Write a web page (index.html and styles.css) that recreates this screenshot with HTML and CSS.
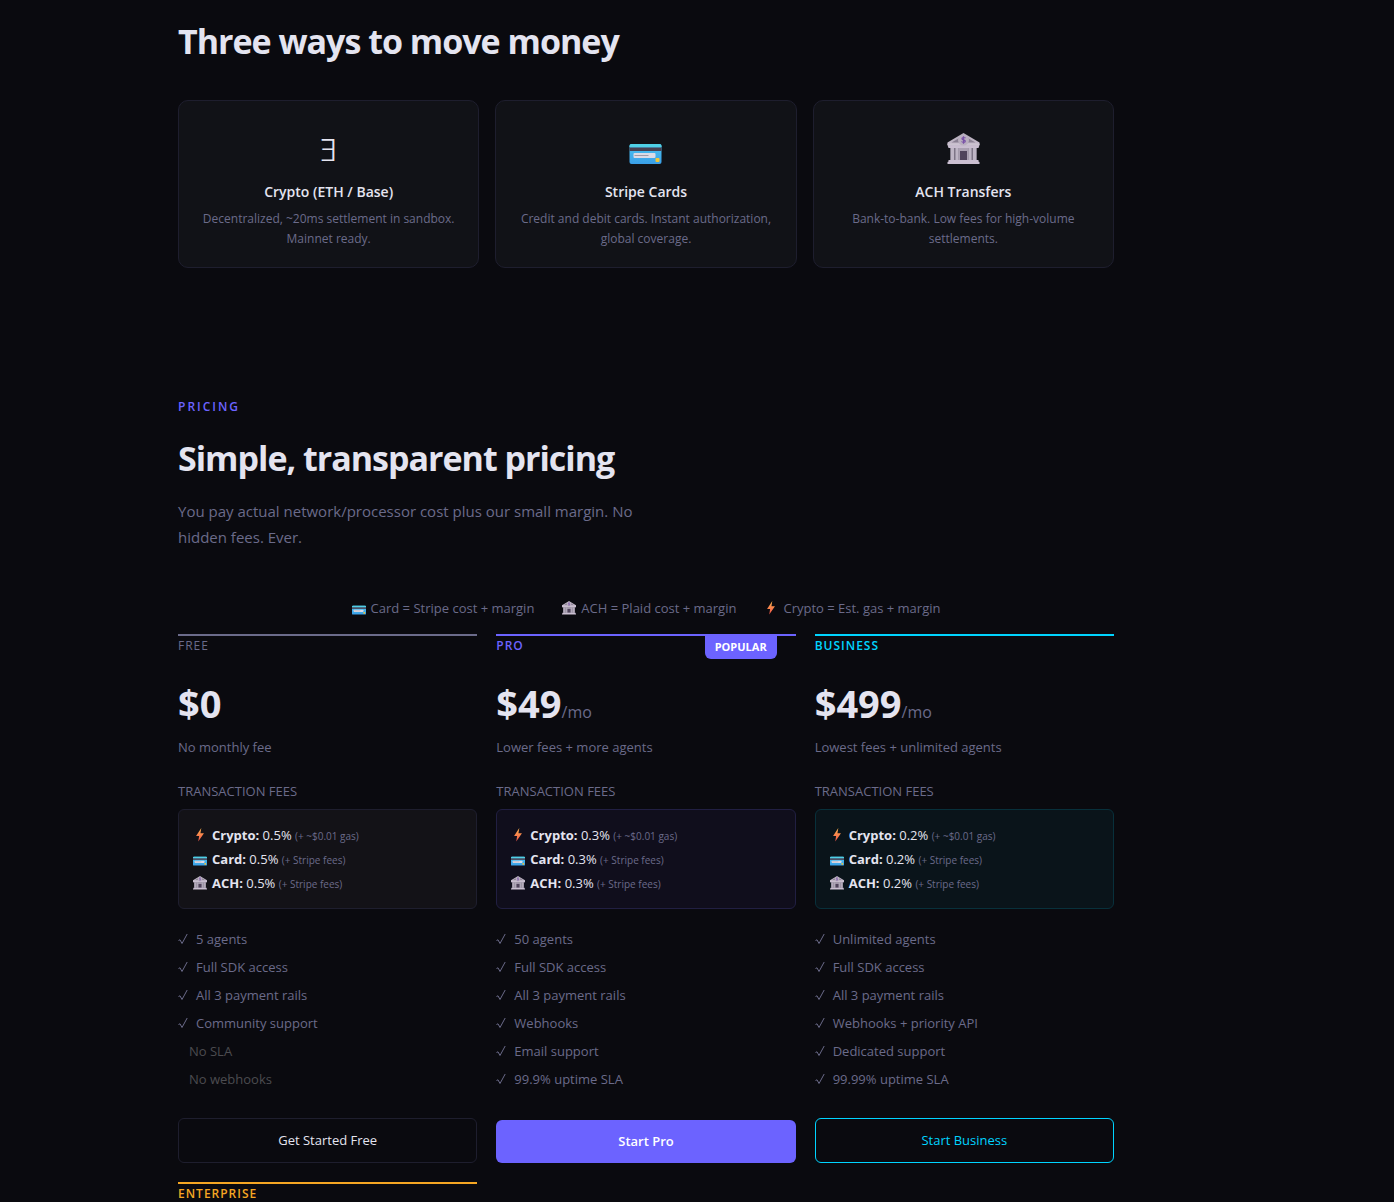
FILE: index.html
```html
<!DOCTYPE html>
<html lang="en">
<head>
<meta charset="utf-8">
<meta name="viewport" content="width=device-width, initial-scale=1">
<title>Pricing</title>
<link rel="stylesheet" href="styles.css">
</head>
<body>
<svg class="sprite" aria-hidden="true">
  <defs>
    <linearGradient id="card-face" x1="0" y1="0" x2="0" y2="1"><stop offset="0" stop-color="#4cc4f0"/><stop offset="1" stop-color="#3a9fe8"/></linearGradient>
    <linearGradient id="bolt-fill" x1="0" y1="0" x2="0" y2="1"><stop offset="0" stop-color="#ffb84d"/><stop offset="1" stop-color="#f2504b"/></linearGradient>
    <linearGradient id="stone" x1="0" y1="0" x2="0" y2="1"><stop offset="0" stop-color="#b3abb8"/><stop offset="1" stop-color="#cbbfd2"/></linearGradient>
    <symbol id="icon-card" viewBox="0 0 32 32">
      <rect y="11" width="32" height="20" rx="2" fill="url(#card-face)"/>
      <path d="M0 14v-1a2 2 0 0 1 2-2h28a2 2 0 0 1 2 2v1z" fill="#4fd0e6"/>
      <path d="M0 14.500h32V18H0z" fill="#484050"/>
      <rect x="4" y="20" width="22" height="5" rx="1" fill="#dcdbe6"/>
      <path d="M5 22.500h14" stroke="#a09ba8"/>
      <rect x="26" y="25" width="4" height="4" rx="1" fill="#f0c53a"/>
    </symbol>
    <symbol id="icon-bank" viewBox="0 0 32 32">
      <path d="M3 14h26v15H3z" fill="#7d7486"/>
      <path d="M0 9.500 16 0l16 9.500V12l-1 3H1l-1-3z" fill="url(#stone)"/>
      <path d="M4 9.500 16 2.500l12 7z" fill="#8b8194"/>
      <path d="M0 10.500h32V12H0z" fill="#cbc3d0"/>
      <path d="M3 15h3.500v12H3zM8 15h3v12H8zM21 15h3v12h-3zM25.500 15H29v12h-3.500z" fill="#beb5c5"/>
      <path d="M11 15h10v12H11z" fill="#aaa0b2"/>
      <path d="M12.500 18h7v9h-7z" fill="#50445c"/>
      <path d="M1 27h30v1.500l1 .5v2H0v-2l1-.5z" fill="#cbbfd2"/>
      <circle cx="16" cy="7" r="5.500" fill="#b9afbf"/>
      <path d="M18 5.200c-1-1.200-3.800-.8-3.500.6.300 1.400 3.300.9 3.300 2.500 0 1.400-2.800 1.500-3.800.2M16 3.200v7.600" fill="none" stroke="#7950a8" stroke-width="1.200"/>
    </symbol>
    <symbol id="icon-bolt" viewBox="0 0 32 32">
      <path d="M19 0 7 18h7l-2 13 13-19h-8z" fill="url(#bolt-fill)"/>
    </symbol>
    <symbol id="icon-check" viewBox="0 0 10 12">
      <path d="M.5 7.500 2 6.800 4 10.500 9.200 1" fill="none" stroke="currentColor"/>
    </symbol>
  </defs>
</svg>

<main class="page">
  <section class="rails">
    <h2 class="heading">Three ways to move money</h2>
    <div class="rail-grid">
      <article class="rail">
        <div class="rail-icon">Ǝ</div>
        <h3 class="rail-title">Crypto (ETH / Base)</h3>
        <p class="rail-text">Decentralized, ~20ms settlement in sandbox. Mainnet ready.</p>
      </article>
      <article class="rail">
        <div class="rail-icon"><svg class="rail-art"><use href="#icon-card"/></svg></div>
        <h3 class="rail-title">Stripe Cards</h3>
        <p class="rail-text">Credit and debit cards. Instant authorization, global coverage.</p>
      </article>
      <article class="rail">
        <div class="rail-icon"><svg class="rail-art"><use href="#icon-bank"/></svg></div>
        <h3 class="rail-title">ACH Transfers</h3>
        <p class="rail-text">Bank-to-bank. Low fees for high-volume settlements.</p>
      </article>
    </div>
  </section>

  <section class="pricing">
    <p class="eyebrow">PRICING</p>
    <h2 class="heading">Simple, transparent pricing</h2>
    <p class="lead">You pay actual network/processor cost plus our small margin. No hidden fees. Ever.</p>

    <ul class="legend">
      <li><svg class="glyph"><use href="#icon-card"/></svg>Card = Stripe cost + margin</li>
      <li><svg class="glyph"><use href="#icon-bank"/></svg>ACH = Plaid cost + margin</li>
      <li><svg class="glyph"><use href="#icon-bolt"/></svg>Crypto = Est. gas + margin</li>
    </ul>

    <div class="plans">
      <article class="plan plan-free">
        <h3 class="plan-name">FREE</h3>
        <p class="price">$0</p>
        <p class="plan-note">No monthly fee</p>
        <h4 class="fees-title">TRANSACTION FEES</h4>
        <ul class="fees">
          <li><svg class="glyph"><use href="#icon-bolt"/></svg><strong>Crypto:</strong> 0.5% <small>(+ ~$0.01 gas)</small></li>
          <li><svg class="glyph"><use href="#icon-card"/></svg><strong>Card:</strong> 0.5% <small>(+ Stripe fees)</small></li>
          <li><svg class="glyph"><use href="#icon-bank"/></svg><strong>ACH:</strong> 0.5% <small>(+ Stripe fees)</small></li>
        </ul>
        <ul class="features">
          <li><svg class="check"><use href="#icon-check"/></svg>5 agents</li>
          <li><svg class="check"><use href="#icon-check"/></svg>Full SDK access</li>
          <li><svg class="check"><use href="#icon-check"/></svg>All 3 payment rails</li>
          <li><svg class="check"><use href="#icon-check"/></svg>Community support</li>
          <li class="missing">No SLA</li>
          <li class="missing">No webhooks</li>
        </ul>
        <button class="cta" type="button">Get Started Free</button>
      </article>

      <article class="plan plan-pro">
        <span class="badge">POPULAR</span>
        <h3 class="plan-name">PRO</h3>
        <p class="price">$49<span class="per">/mo</span></p>
        <p class="plan-note">Lower fees + more agents</p>
        <h4 class="fees-title">TRANSACTION FEES</h4>
        <ul class="fees">
          <li><svg class="glyph"><use href="#icon-bolt"/></svg><strong>Crypto:</strong> 0.3% <small>(+ ~$0.01 gas)</small></li>
          <li><svg class="glyph"><use href="#icon-card"/></svg><strong>Card:</strong> 0.3% <small>(+ Stripe fees)</small></li>
          <li><svg class="glyph"><use href="#icon-bank"/></svg><strong>ACH:</strong> 0.3% <small>(+ Stripe fees)</small></li>
        </ul>
        <ul class="features">
          <li><svg class="check"><use href="#icon-check"/></svg>50 agents</li>
          <li><svg class="check"><use href="#icon-check"/></svg>Full SDK access</li>
          <li><svg class="check"><use href="#icon-check"/></svg>All 3 payment rails</li>
          <li><svg class="check"><use href="#icon-check"/></svg>Webhooks</li>
          <li><svg class="check"><use href="#icon-check"/></svg>Email support</li>
          <li><svg class="check"><use href="#icon-check"/></svg>99.9% uptime SLA</li>
        </ul>
        <button class="cta cta-solid" type="button">Start Pro</button>
      </article>

      <article class="plan plan-business">
        <h3 class="plan-name">BUSINESS</h3>
        <p class="price">$499<span class="per">/mo</span></p>
        <p class="plan-note">Lowest fees + unlimited agents</p>
        <h4 class="fees-title">TRANSACTION FEES</h4>
        <ul class="fees">
          <li><svg class="glyph"><use href="#icon-bolt"/></svg><strong>Crypto:</strong> 0.2% <small>(+ ~$0.01 gas)</small></li>
          <li><svg class="glyph"><use href="#icon-card"/></svg><strong>Card:</strong> 0.2% <small>(+ Stripe fees)</small></li>
          <li><svg class="glyph"><use href="#icon-bank"/></svg><strong>ACH:</strong> 0.2% <small>(+ Stripe fees)</small></li>
        </ul>
        <ul class="features">
          <li><svg class="check"><use href="#icon-check"/></svg>Unlimited agents</li>
          <li><svg class="check"><use href="#icon-check"/></svg>Full SDK access</li>
          <li><svg class="check"><use href="#icon-check"/></svg>All 3 payment rails</li>
          <li><svg class="check"><use href="#icon-check"/></svg>Webhooks + priority API</li>
          <li><svg class="check"><use href="#icon-check"/></svg>Dedicated support</li>
          <li><svg class="check"><use href="#icon-check"/></svg>99.99% uptime SLA</li>
        </ul>
        <button class="cta cta-cyan" type="button">Start Business</button>
      </article>

      <article class="plan plan-enterprise">
        <h3 class="plan-name">ENTERPRISE</h3>
      </article>
    </div>
  </section>
</main>
</body>
</html>
```

FILE: styles.css
```css
:root {
  --bg: #0a0a0f;
  --panel: #111217;
  --line: #1e1e2e;
  --text: #e4e4f0;
  --muted: #6b6b8a;
  --accent: #6c63ff;
  --cyan: #00d4ff;
  --amber: #f5a623;
}

* {
  box-sizing: border-box;
  margin: 0;
  padding: 0;
}

body {
  background: var(--bg);
  color: var(--text);
  font-family: "Open Sans", "Noto Sans", sans-serif;
  font-size: 13px;
  line-height: 20px;
}

ul {
  list-style: none;
}

.sprite {
  position: absolute;
  width: 0;
  height: 0;
}

.page {
  max-width: 1292px;
  padding: 15px 178px 0;
}

.heading {
  font-size: 34px;
  line-height: 52px;
  font-weight: 700;
  letter-spacing: -1px;
}

/* Payment rails */
.rail-grid {
  display: grid;
  grid-template-columns: repeat(3, 1fr);
  gap: 16px;
  margin-top: 33px;
}

.rail {
  padding: 24px 16px 18px;
  border: 1px solid var(--line);
  border-radius: 10px;
  background: var(--panel);
  text-align: center;
}

.rail-icon {
  height: 48px;
  margin-bottom: 9px;
  font-size: 32px;
  line-height: 48px;
  font-weight: 300;
}

.rail-art {
  display: block;
  width: 33px;
  height: 40px;
  margin: 0 auto;
  padding-top: 8px;
}

.rail-title {
  margin-bottom: 7px;
  font-size: 14px;
  line-height: 20px;
  font-weight: 600;
}

.rail-text {
  color: var(--muted);
  font-size: 12px;
}

/* Pricing intro */
.pricing {
  padding-top: 129px;
}

.eyebrow {
  margin-bottom: 15px;
  color: var(--accent);
  font-size: 12px;
  font-weight: 600;
  letter-spacing: 2px;
}

.lead {
  max-width: 480px;
  margin-top: 14px;
  color: var(--muted);
  font-size: 15px;
  line-height: 26px;
}

.legend {
  display: flex;
  justify-content: center;
  gap: 28px;
  margin-top: 48px;
  color: var(--muted);
  font-size: 13px;
}

.legend li,
.features li {
  display: flex;
  align-items: center;
}

.glyph {
  width: 14px;
  height: 14px;
  margin-right: 5px;
}

/* Plans */
.plans {
  display: grid;
  grid-template-columns: repeat(3, 1fr);
  gap: 19px;
  margin-top: 16px;
}

.plan {
  --tone: var(--muted);
  position: relative;
  display: flex;
  flex-direction: column;
  border-top: 2px solid var(--tone);
}

.plan-pro {
  --tone: var(--accent);
}

.plan-business {
  --tone: var(--cyan);
}

.plan-enterprise {
  --tone: var(--amber);
}

.plan-name {
  color: var(--tone);
  font-size: 12px;
  font-weight: 600;
  letter-spacing: 1px;
}

.plan-free .plan-name {
  font-weight: 500;
}

.badge {
  position: absolute;
  top: -2px;
  right: 19px;
  padding: 3px 10px 2px;
  border-radius: 0 0 6px 6px;
  background: var(--accent);
  color: #fff;
  font-size: 11px;
  font-weight: 700;
}

.price {
  margin-top: 21px;
  font-size: 38px;
  line-height: 52px;
  font-weight: 700;
}

.per {
  color: var(--muted);
  font-size: 16px;
  line-height: 16px;
  font-weight: 400;
}

.plan-note {
  margin-top: 8px;
  color: var(--muted);
}

.fees-title {
  margin: 24px 0 8px;
  color: var(--muted);
  font-size: 13px;
  font-weight: 500;
}

.fees {
  padding: 13px 14px;
  border: 1px solid var(--line);
  border-radius: 6px;
  background: #131217;
  line-height: 24px;
}

.fees .glyph {
  margin-top: 5px;
  vertical-align: top;
}

.plan-pro .fees {
  border-color: #211f42;
  background: #100e1c;
}

.plan-business .fees {
  border-color: #08303b;
  background: #0a141a;
}

.fees small {
  color: var(--muted);
  font-size: 10px;
  line-height: 16px;
}

.features {
  margin: 16px 0 25px;
  color: var(--muted);
  line-height: 28px;
}

.check {
  width: 10px;
  height: 12px;
  margin-right: 8px;
}

.features .missing {
  padding-left: 11px;
  color: #4c4c50;
}

.cta {
  margin-top: auto;
  padding: 12px;
  border: 1px solid var(--line);
  border-radius: 6px;
  background: transparent;
  color: var(--text);
  font: inherit;
  line-height: 19px;
}

.cta-solid {
  border: 0;
  background: var(--accent);
  color: #fff;
  font-weight: 600;
}

.cta-cyan {
  border-color: var(--cyan);
  color: var(--cyan);
}
```
